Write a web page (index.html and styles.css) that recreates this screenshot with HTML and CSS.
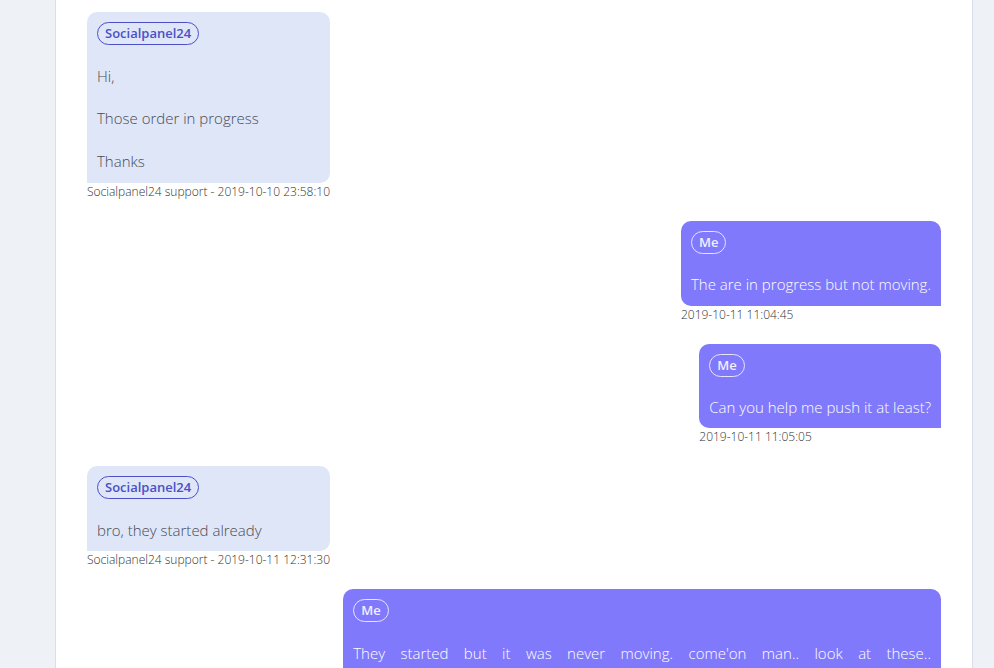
FILE: index.html
```html
<!DOCTYPE html>
<html>
<head>
<meta charset="utf-8">
<link rel="stylesheet" href="styles.css">
</head>
<body>
<div class="page">
  <div class="panel">
    <div class="msg left">
      <div class="wrap">
        <div class="bubble">
          <div class="badge">Socialpanel24</div>
          <div class="text">Hi,<br><br>Those order in progress<br><br>Thanks</div>
        </div>
        <div class="meta">Socialpanel24 support - 2019-10-10 23:58:10</div>
      </div>
    </div>
    <div class="msg right">
      <div class="wrap">
        <div class="bubble">
          <div class="badge">Me</div>
          <div class="text">The are in progress but not moving.</div>
        </div>
        <div class="meta">2019-10-11 11:04:45</div>
      </div>
    </div>
    <div class="msg right">
      <div class="wrap">
        <div class="bubble">
          <div class="badge">Me</div>
          <div class="text">Can you help me push it at least?</div>
        </div>
        <div class="meta">2019-10-11 11:05:05</div>
      </div>
    </div>
    <div class="msg left">
      <div class="wrap">
        <div class="bubble">
          <div class="badge">Socialpanel24</div>
          <div class="text">bro, they started already</div>
        </div>
        <div class="meta">Socialpanel24 support - 2019-10-11 12:31:30</div>
      </div>
    </div>
    <div class="msg right">
      <div class="wrap">
        <div class="bubble">
          <div class="badge">Me</div>
          <div class="text justify">They started but it was never moving. come'on man.. look at these.. 4567812,4567813,4567814,4567815,4567816,4567817,4567818 they are all still at the same start count since yesterday.</div>
        </div>
        <div class="meta">2019-10-11 12:40:12</div>
      </div>
    </div>
  </div>
</div>
</body>
</html>
```
FILE: styles.css
```css
html, body {
  margin: 0;
  padding: 0;
  height: 100%;
  overflow: hidden;
}
body {
  background: #eef2f6;
  font-family: "Open Sans", "Liberation Sans", sans-serif;
}
.page {
  display: flex;
  height: 100%;
  padding-left: 55px;
  box-sizing: border-box;
}
.panel {
  width: 918px;
  box-sizing: border-box;
  background: #ffffff;
  border-left: 1px solid #d9deea;
  border-right: 1px solid #d9deea;
  padding: 12px 31px 0 31px;
  min-height: 100%;
}
.msg {
  display: flex;
  margin-bottom: 21px;
}
.msg.left { justify-content: flex-start; }
.msg.right { justify-content: flex-end; }
.wrap {
  display: flex;
  flex-direction: column;
  max-width: 70%;
}
.bubble {
  padding: 10px;
  border-radius: 10px;
}
.left .bubble {
  background: #dee6f8;
  color: #484b55;
  border-radius: 10px 10px 10px 0;
}
.right .bubble {
  background: #8179fb;
  color: #ffffff;
  border-radius: 10px 10px 0 10px;
}
.badge {
  width: fit-content;
  font-size: 13px;
  font-weight: 600;
  line-height: 21px;
  padding: 0 7px;
  border-radius: 12px;
}
.left .badge {
  color: #4b50c6;
  border: 1px solid #4b50c6;
}
.right .badge {
  color: #f1f0ff;
  border: 1px solid #e6e4ff;
}
.text {
  margin-top: 20.5px;
  font-size: 15px;
  font-weight: 300;
  line-height: 1.42857;
}
.text.justify {
  text-align: justify;
}
.meta {
  margin-top: 1px;
  font-size: 12px;
  font-weight: 300;
  line-height: 16px;
  color: #333333;
  white-space: nowrap;
}
```
